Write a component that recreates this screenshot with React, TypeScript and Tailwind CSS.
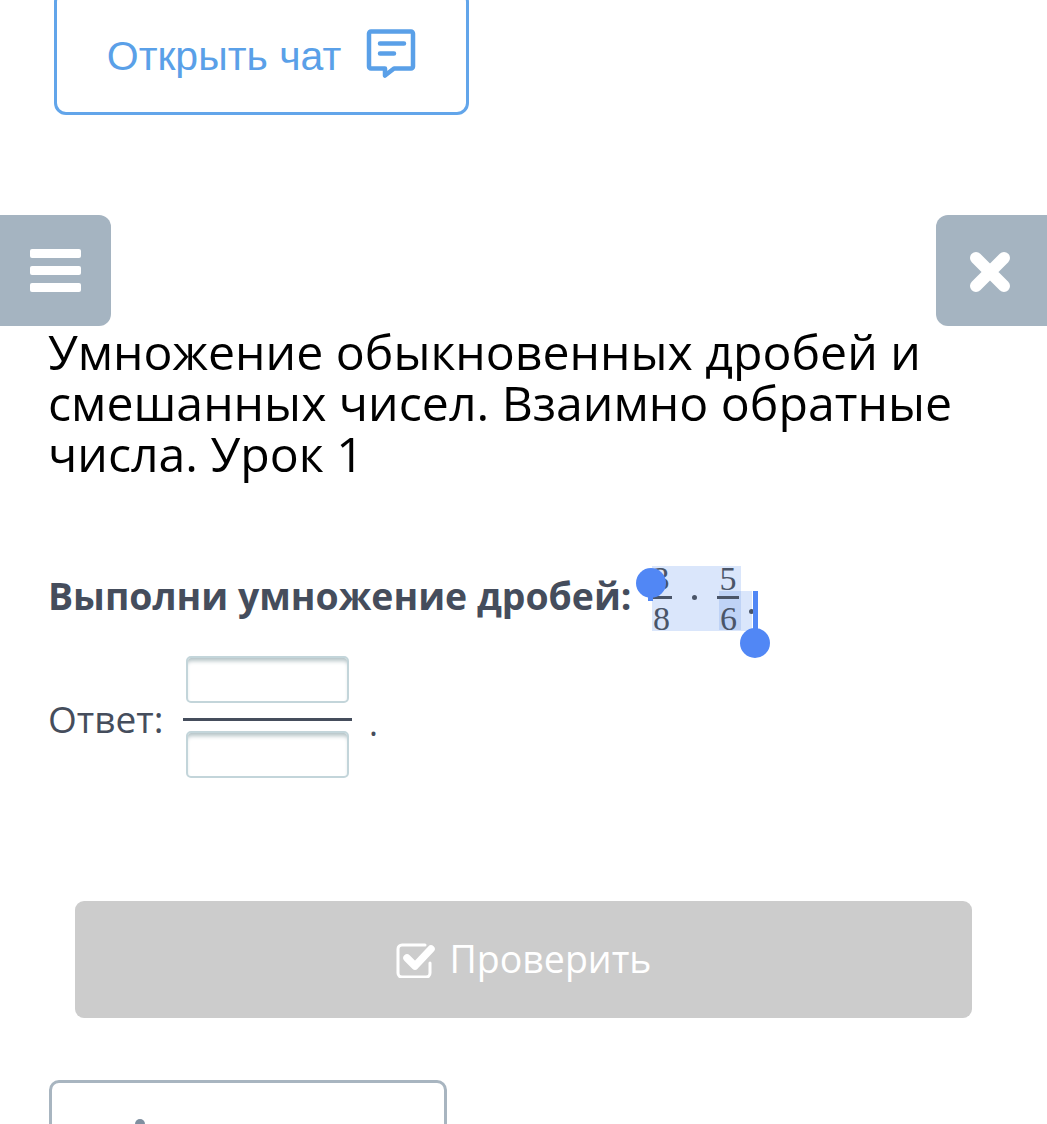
function ChatIcon() {
  return (
    <svg width="50" height="50" viewBox="0 0 50 50" fill="none" className="mt-[-8px]">
      <path
        d="M5 3.500h40a2 2 0 0 1 2 2v33a2 2 0 0 1-2 2H28l-9 7v-7H5a2 2 0 0 1-2-2v-33a2 2 0 0 1 2-2z"
        stroke="#5aa0e8"
        strokeWidth="4.500"
        strokeLinejoin="round"
      />
      <path d="M14 15.500h24M14 25.500h14" stroke="#5aa0e8" strokeWidth="4.500" strokeLinecap="round" />
    </svg>
  );
}

function CheckIcon() {
  return (
    <svg width="40" height="36" viewBox="0 0 40 36" fill="none">
      <path
        d="M29 3H6a4 4 0 0 0-4 4v24a4 4 0 0 0 4 4h24a4 4 0 0 0 4-4V21"
        stroke="white"
        strokeWidth="3"
        strokeLinecap="round"
      />
      <path d="M11 16l8 8L35 7" stroke="white" strokeWidth="7.500" strokeLinecap="round" strokeLinejoin="round" />
    </svg>
  );
}

function Fraction({ top, bottom, dark }: { top: string; bottom: string; dark?: boolean }) {
  return (
    <span className="relative flex w-[22px] shrink-0 flex-col">
      {dark && <span className="absolute left-[2px] top-[25px] h-[39px] w-[22px] bg-[#bfd3f6]" />}
      <span className="relative h-[30px] text-center text-[34px] leading-[25px]">{top}</span>
      <span className="relative h-[3px] w-full bg-[#4a5568]" />
      <span className="relative h-[32px] pl-[3px] text-[34px] leading-[40px]">{bottom}</span>
    </span>
  );
}

function AnswerInput() {
  return (
    <div className="h-[47px] w-[163px] rounded-[5px] border-2 border-[#c3d5da] bg-white shadow-[inset_0_5px_4px_-2px_#b4c3c6]" />
  );
}

export default function App() {
  return (
    <div className="h-[1124px] w-[1047px] overflow-hidden bg-white font-['Open_Sans',sans-serif] text-[#454d5c]">
      <button className="ml-[54px] mt-[-10px] flex h-[125px] w-[415px] items-center justify-center gap-[25px] rounded-[12px] border-[3px] border-[#62a5ea] pt-[9px] font-['Liberation_Sans',sans-serif] text-[41px] text-[#5aa0e8]">
        Открыть чат
        <ChatIcon />
      </button>

      <div className="mt-[100px] flex h-[111px] justify-between">
        <div className="flex w-[111px] flex-col items-center justify-center gap-[8px] rounded-r-[12px] bg-[#a5b4c1]">
          <span className="h-[9px] w-[51px] rounded-[2px] bg-white" />
          <span className="h-[9px] w-[51px] rounded-[2px] bg-white" />
          <span className="h-[9px] w-[51px] rounded-[2px] bg-white" />
        </div>
        <div className="flex w-[111px] items-center justify-center rounded-l-[12px] bg-[#a5b4c1]">
          <svg width="42" height="42" viewBox="0 0 42 42" className="ml-[-3px] mt-[3px]">
            <path d="M7 7l28 28M35 7L7 35" stroke="white" strokeWidth="12" strokeLinecap="round" />
          </svg>
        </div>
      </div>

      <h1 className="px-[48px] text-[48.200px] leading-[51px] text-black">
        Умножение обыкновенных дробей и смешанных чисел. Взаимно обратные числа. Урок 1
      </h1>

      <div className="relative ml-[48px] mt-[87px] flex h-[65px] items-center">
        <span className="mt-[-6px] w-[604px] shrink-0 text-[37.400px] font-bold leading-[60px]">
          Выполни умножение дробей:
        </span>
        <span className="flex h-[65px] w-[89px] items-start bg-[#dae6fb] font-['Liberation_Serif',serif] text-[#4a5568]">
          <span className="ml-[-2px]">
            <Fraction top="3" bottom="8" />
          </span>
          <span className="ml-[20px] mt-[29px] h-[5px] w-[5px] shrink-0 rounded-full bg-[#4a5568]" />
          <span className="ml-[20px]">
            <Fraction top="5" bottom="6" dark />
          </span>
        </span>
        <span className="mt-[25px] flex h-[40px] w-[11px] items-center justify-end bg-[#dae6fb]">
          <span className="h-[5px] w-[5px] translate-x-[2px] rounded-full bg-[#4a5568]" />
        </span>
        <span className="absolute left-[588px] top-[2px] h-[30px] w-[30px] rounded-full bg-[#5187f5]" />
        <span className="absolute left-[600px] top-[28px] h-[7px] w-[5px] bg-[#5187f5]" />
        <span className="absolute left-[705px] top-[25px] h-[40px] w-[5px] bg-[#5187f5]" />
        <span className="absolute left-[692px] top-[62px] h-[30px] w-[30px] rounded-full bg-[#5187f5]" />
      </div>

      <div className="ml-[48px] mt-[25px] flex items-center">
        <span className="mt-[4px] w-[135px] shrink-0 text-[37px]">Ответ:</span>
        <div className="flex w-[169px] flex-col items-center">
          <AnswerInput />
          <div className="mb-[10px] mt-[15px] h-[3px] w-full bg-[#454d5c]" />
          <AnswerInput />
        </div>
        <span className="ml-[17px] mt-[12px] text-[34px]">.</span>
      </div>

      <button className="ml-[75px] mt-[123px] flex h-[117px] w-[897px] items-center justify-center gap-[14px] rounded-[9px] bg-[#cccccc] text-[37.500px] text-white">
        <CheckIcon />
        Проверить
      </button>

      <div className="relative ml-[49px] mt-[62px] h-[80px] w-[398px] rounded-[10px] border-[3px] border-[#a8b5c0]">
        <span className="absolute left-[83px] top-[36px] h-[10px] w-[10px] rounded-full bg-[#7f8fa0]" />
      </div>
    </div>
  );
}
